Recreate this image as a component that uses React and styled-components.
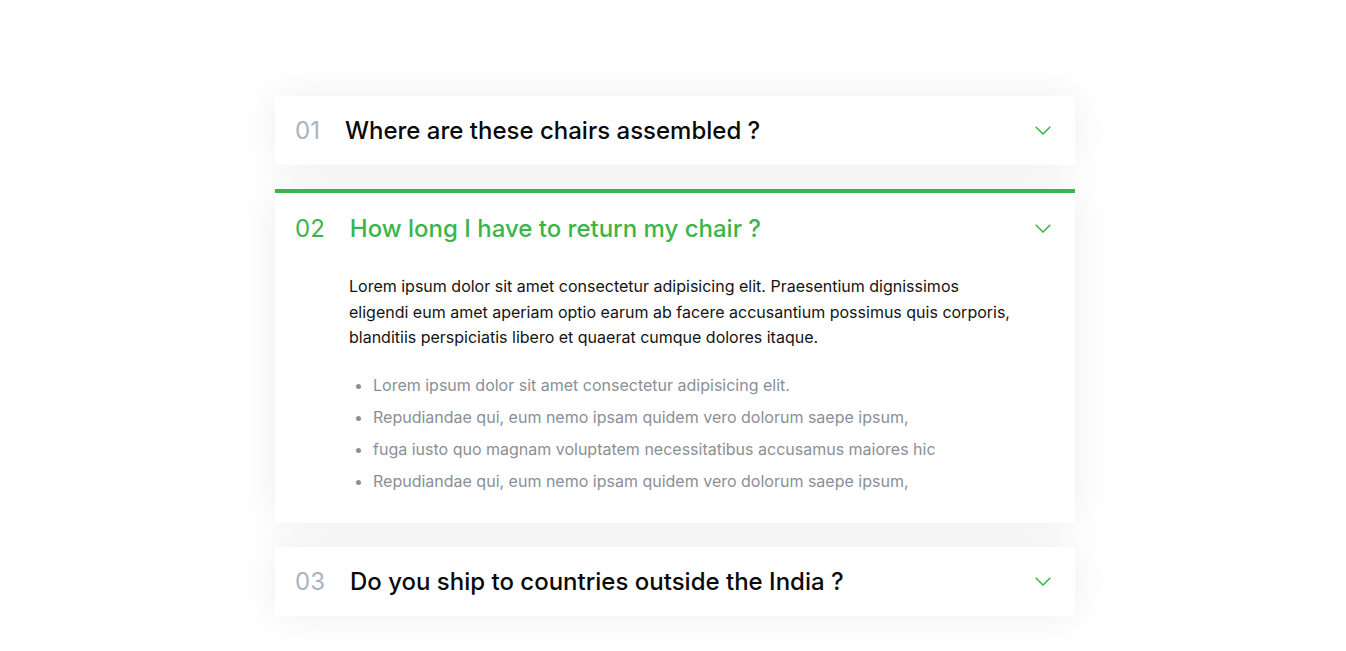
import styled, { createGlobalStyle } from "styled-components";

const GlobalStyle = createGlobalStyle`
  body {
    margin: 0;
    background: #ffffff;
    font-family: "Inter", "Noto Sans", sans-serif;
  }
`;

const Page = styled.div`
  min-height: 651px;
  display: flex;
  justify-content: center;
  padding: 96px 0 0 4px;
  box-sizing: border-box;
`;

const List = styled.div`
  width: 800px;
  display: flex;
  flex-direction: column;
  gap: 24px;
`;

const Item = styled.div`
  background: #ffffff;
  box-shadow: 0 0 40px rgba(0, 0, 0, 0.07);
  border-top: ${(p) => (p.$open ? "4px solid #3bb54a" : "none")};
`;

const Header = styled.div`
  height: ${(p) => (p.$open ? "71px" : "69px")};
  display: flex;
  align-items: center;
  padding: 0 24px 0 20px;
  cursor: pointer;
`;

const Num = styled.span`
  font-size: 24px;
  color: ${(p) => (p.$open ? "#3bb54a" : "#a9b3bf")};
  margin-right: 25px;
`;

const Question = styled.h3`
  flex: 1;
  margin: 0;
  font-size: 24px;
  font-weight: 500;
  color: ${(p) => (p.$open ? "#3bb54a" : "#0a0a0a")};
`;

const Body = styled.div`
  padding: 10px 60px 26px 74px;
`;

const Text = styled.p`
  margin: 0 0 18px;
  font-size: 16px;
  line-height: 25.6px;
  color: #141414;
`;

const Points = styled.ul`
  margin: 0;
  padding-left: 24px;
  color: #8a8f97;
  font-size: 16px;
  line-height: 32px;
`;

const Chevron = () => (
  <svg width="16" height="9" viewBox="0 0 16 9" fill="none">
    <path d="M0.7 0.7l7.3 7.3 7.3-7.3" stroke="#3bb54a" strokeWidth="1.5" />
  </svg>
);

const faqs = [
  { n: "01", q: "Where are these chairs assembled ?" },
  { n: "02", q: "How long I have to return my chair ?", open: true },
  { n: "03", q: "Do you ship to countries outside the India ?" },
];

const points = [
  "Lorem ipsum dolor sit amet consectetur adipisicing elit.",
  "Repudiandae qui, eum nemo ipsam quidem vero dolorum saepe ipsum,",
  "fuga iusto quo magnam voluptatem necessitatibus accusamus maiores hic",
  "Repudiandae qui, eum nemo ipsam quidem vero dolorum saepe ipsum,",
];

export default function App() {
  return (
    <>
      <GlobalStyle />
      <Page>
        <List>
          {faqs.map((f) => (
            <Item key={f.n} $open={f.open}>
              <Header $open={f.open}>
                <Num $open={f.open}>{f.n}</Num>
                <Question $open={f.open}>{f.q}</Question>
                <Chevron />
              </Header>
              {f.open && (
                <Body>
                  <Text>
                    Lorem ipsum dolor sit amet consectetur adipisicing elit. Praesentium dignissimos eligendi eum amet
                    aperiam optio earum ab facere accusantium possimus quis corporis, blanditiis perspiciatis libero et
                    quaerat cumque dolores itaque.
                  </Text>
                  <Points>
                    {points.map((p, i) => (
                      <li key={i}>{p}</li>
                    ))}
                  </Points>
                </Body>
              )}
            </Item>
          ))}
        </List>
      </Page>
    </>
  );
}
